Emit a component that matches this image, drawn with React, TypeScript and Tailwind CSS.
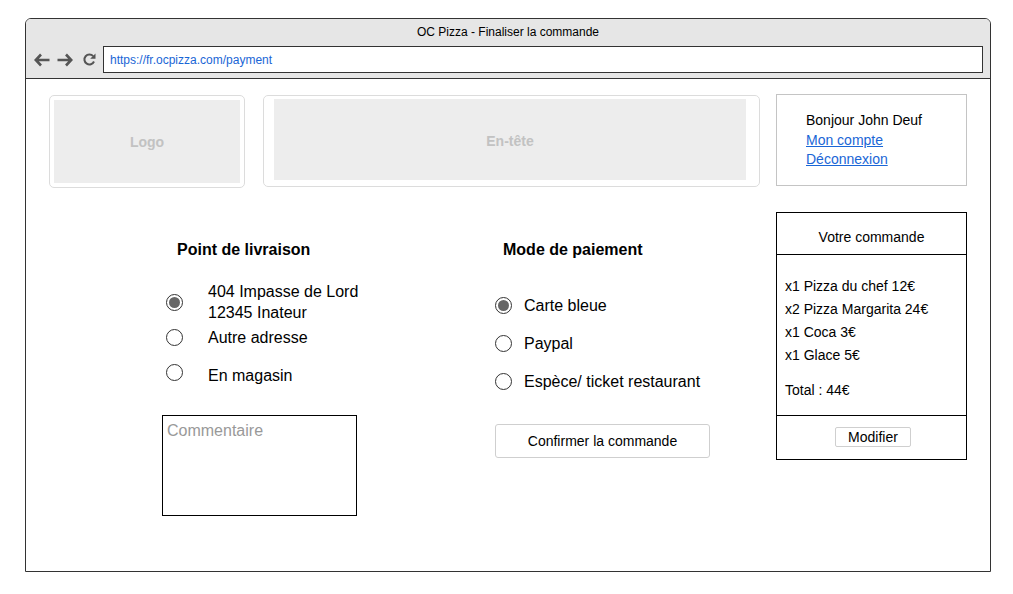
import React from "react";

const FONT = { fontFamily: '"Liberation Sans", Arial, sans-serif' };

function Radio({ on = false }: { on?: boolean }) {
  return (
    <span className="flex h-[17px] w-[17px] shrink-0 items-center justify-center rounded-full border border-[#333] bg-white">
      {on && <span className="h-[11px] w-[11px] rounded-full bg-[#666]" />}
    </span>
  );
}

function Placeholder({ label, className, inner }: { label: string; className: string; inner: string }) {
  return (
    <div className={`rounded-[5px] border border-[#dcdcdc] ${className}`}>
      <div className={`flex items-center justify-center bg-[#ededed] text-[14px] font-bold text-[#c2c2c2] ${inner}`}>
        {label}
      </div>
    </div>
  );
}

export default function App() {
  return (
    <div className="h-[594px] w-full bg-white pt-[18px] pl-[25px] text-black" style={FONT}>
      <div className="flex h-[554px] w-[966px] flex-col overflow-hidden rounded-t-[6px] border border-[#333]">
        {/* browser chrome */}
        <div className="h-[60px] shrink-0 border-b border-[#333] bg-[#e6e6e6]">
          <div className="pt-[6px] text-center text-[12px] leading-[14px]">OC Pizza - Finaliser la commande</div>
          <div className="mt-[7px] flex items-center pl-[8px]">
            <svg width="16" height="14" viewBox="0 0 16 14">
              <path d="M7 1.5 L1.8 7 L7 12.5 M2 7 H15.5" stroke="#555" strokeWidth="2.6" fill="none" />
            </svg>
            <svg width="16" height="14" viewBox="0 0 16 14" className="ml-[7px]">
              <path d="M9 1.5 L14.2 7 L9 12.5 M14 7 H0.5" stroke="#555" strokeWidth="2.6" fill="none" />
            </svg>
            <svg width="15" height="15" viewBox="0 0 15 15" className="ml-[9px]">
              <path d="M12 9.5 A5 5 0 1 1 11.2 4.2" stroke="#555" strokeWidth="2" fill="none" />
              <path d="M13.5 1.5 V6.8 H8.2 Z" fill="#555" />
            </svg>
            <div className="ml-[6px] flex h-[27px] w-[880px] items-center border border-[#333] bg-white pl-[6px] text-[12px] text-[#1a66d6]">
              https://fr.ocpizza.com/payment
            </div>
          </div>
        </div>

        {/* page */}
        <div className="flex-1 bg-white">
          <div className="mt-[16px] flex items-start">
            <Placeholder label="Logo" className="ml-[23px] h-[93px] w-[196px] p-[4px]" inner="h-full w-full pt-[1px]" />
            <Placeholder
              label="En-tête"
              className="ml-[18px] h-[92px] w-[497px] pt-[3px] pr-[13px] pb-[6px] pl-[10px]"
              inner="h-full w-full pt-[3px]"
            />
            <div className="ml-[16px] -mt-[1px] flex h-[92px] w-[191px] flex-col border border-[#c4c4c4] pt-[16px] pl-[29px] text-[14px] leading-[19.5px]">
              <span>Bonjour John Deuf</span>
              <a href="#" className="w-fit text-[#1a66d6] underline">Mon compte</a>
              <a href="#" className="w-fit text-[#1a66d6] underline">Déconnexion</a>
            </div>
          </div>

          <div className="mt-[24px] flex items-start">
            {/* livraison */}
            <div className="ml-[136px] w-[195px] shrink-0">
              <div className="mt-[29px] pl-[15px] text-[16px] font-bold leading-[18px]">Point de livraison</div>
              <div className="mt-[22px] flex items-center pl-[4px]">
                <Radio on />
                <div className="ml-[25px] whitespace-nowrap text-[16px] leading-[21px]">
                  404 Impasse de Lord
                  <br />
                  12345 Inateur
                </div>
              </div>
              <div className="mt-[4px] flex items-center pl-[4px]">
                <Radio />
                <div className="ml-[25px] whitespace-nowrap text-[16px] leading-[21px]">Autre adresse</div>
              </div>
              <div className="mt-[16px] flex items-start pl-[4px]">
                <Radio />
                <div className="ml-[25px] mt-[1px] whitespace-nowrap text-[16px] leading-[21px]">En magasin</div>
              </div>
              <div className="mt-[29px] h-[101px] w-[195px] border border-black px-[4px] pt-[5px] text-[16px] leading-[20px] text-[#999]">
                Commentaire
              </div>
            </div>

            {/* paiement */}
            <div className="ml-[138px] w-[215px] shrink-0">
              <div className="mt-[29px] pl-[8px] text-[16px] font-bold leading-[18px]">Mode de paiement</div>
              <div className="mt-[36px] flex flex-col gap-[17px]">
                {[
                  ["Carte bleue", true],
                  ["Paypal", false],
                  ["Espèce/ ticket restaurant", false],
                ].map(([t, on]) => (
                  <div key={t as string} className="flex items-center">
                    <Radio on={on as boolean} />
                    <span className="ml-[12px] text-[16px] leading-[21px]">{t as string}</span>
                  </div>
                ))}
              </div>
              <button
                type="button"
                className="mt-[32px] flex h-[34px] w-[215px] items-center justify-center rounded-[3px] border border-[#cfcfcf] bg-white text-[14px]"
              >
                Confirmer la commande
              </button>
            </div>

            {/* commande */}
            <div className="ml-[66px] flex h-[248px] w-[191px] shrink-0 flex-col border border-black">
              <div className="flex h-[42px] items-center justify-center border-b border-black pt-[8px] text-[14px]">
                Votre commande
              </div>
              <div className="flex h-[161px] flex-col border-b border-black pt-[20px] pl-[8px] text-[14px] leading-[23px]">
                <span>x1 Pizza du chef 12€</span>
                <span>x2 Pizza Margarita 24€</span>
                <span>x1 Coca 3€</span>
                <span>x1 Glace 5€</span>
                <span className="mt-[12px]">Total : 44€</span>
              </div>
              <div className="flex flex-1 justify-center pt-[11px]">
                <button
                  type="button"
                  className="ml-[3px] flex h-[20px] w-[76px] items-center justify-center rounded-[2px] border border-[#cfcfcf] bg-white text-[14px]"
                >
                  Modifier
                </button>
              </div>
            </div>
          </div>
        </div>
      </div>
    </div>
  );
}
